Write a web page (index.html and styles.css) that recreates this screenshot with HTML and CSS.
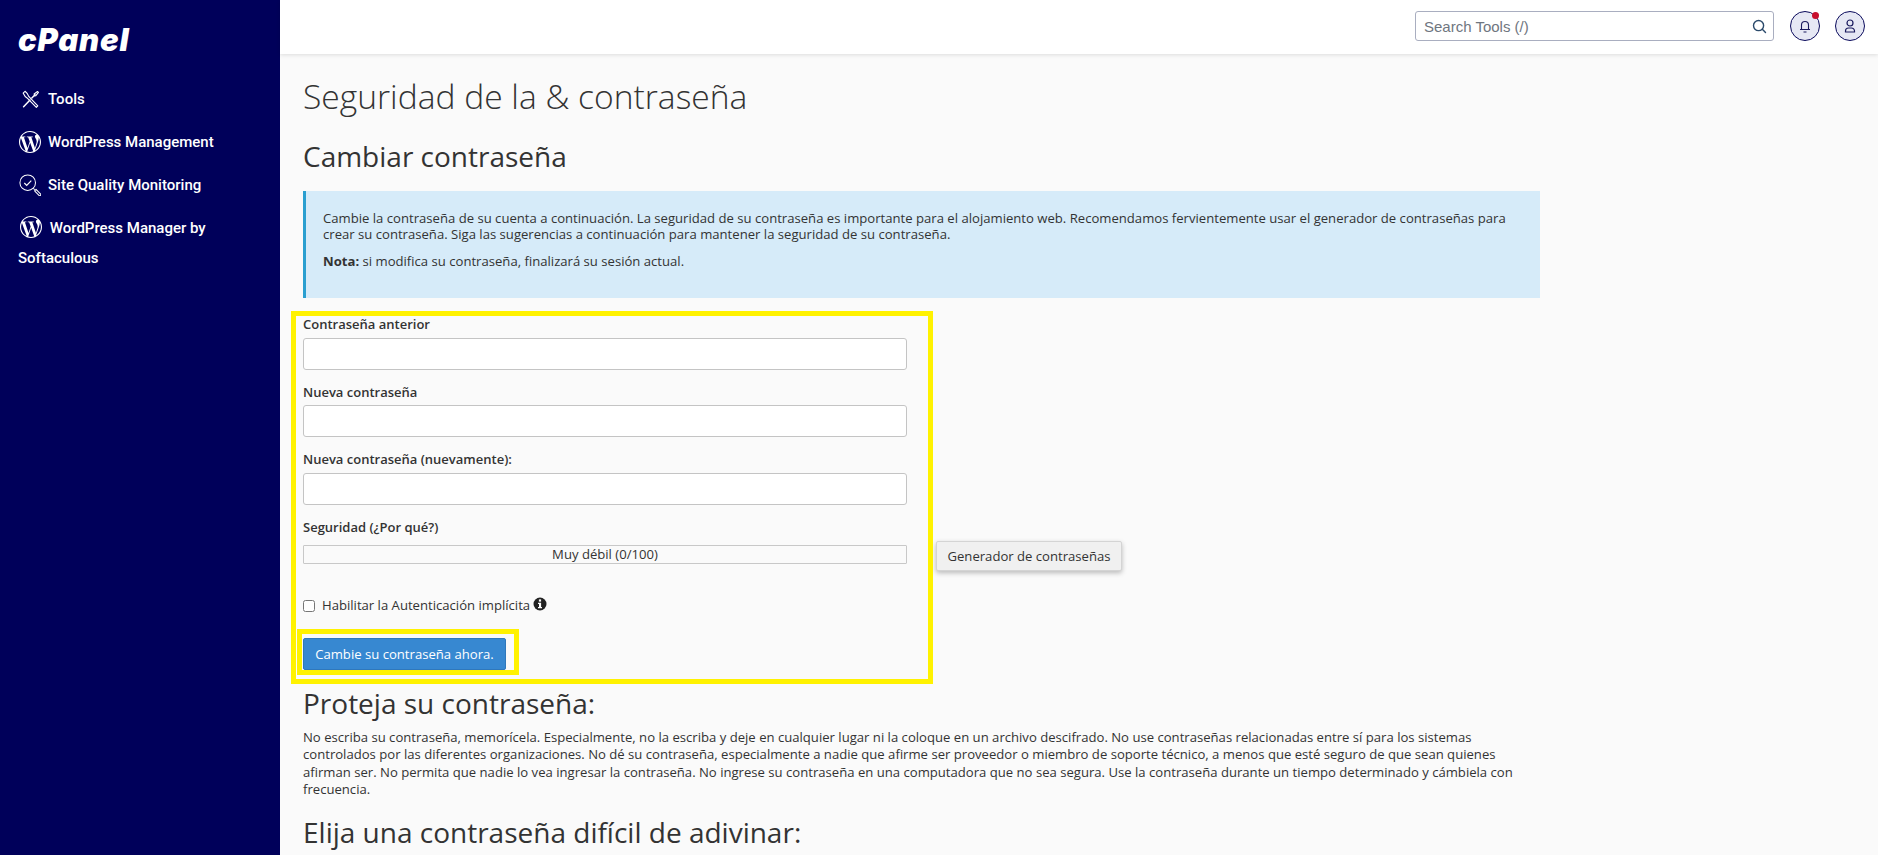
FILE: index.html
```html
<!DOCTYPE html>
<html lang="es">
<head>
<meta charset="utf-8">
<title>Cambiar contraseña</title>
<link rel="stylesheet" href="styles.css">
</head>
<body>
<div class="app">
  <aside class="sidebar">
    <div class="logo">cPanel</div>
    <nav class="nav">
      <a class="nav-item"><svg class="nav-icon" viewBox="0 0 24 24" fill="none" stroke="#fff" stroke-width="1.6"><path d="M5 20.5 12 13M14 11l3.5-3.6" stroke-linecap="round"/><path d="M16.5 6.5 20.2 3.8l1 1-2.8 3.6-1.4.2z" stroke-width="1.2" stroke-linejoin="round"/><path d="M4.5 5.5 6.6 3.6c2 1.6 3.4 3.6 4 5.6l9.9 10.4-1.6 1.6L8.8 10.8C7 10 5.6 8 4.5 5.5z" stroke-width="1.2" stroke-linejoin="round"/></svg><span>Tools</span></a>
      <a class="nav-item"><svg class="nav-icon" viewBox="0 0 24 24" fill="#fff"><path d="M21.469 6.825c.84 1.537 1.318 3.3 1.318 5.175 0 3.979-2.156 7.456-5.363 9.325l3.295-9.527c.615-1.54.82-2.771.82-3.864 0-.405-.026-.78-.07-1.11m-7.981.105c.647-.03 1.232-.105 1.232-.105.582-.075.514-.93-.067-.899 0 0-1.755.135-2.88.135-1.064 0-2.85-.15-2.85-.15-.585-.03-.661.855-.075.885 0 0 .54.061 1.125.09l1.68 4.605-2.37 7.08L5.354 6.9c.649-.03 1.234-.1 1.234-.1.585-.075.516-.93-.065-.896 0 0-1.746.138-2.874.138-.2 0-.438-.008-.69-.015C4.911 3.15 8.235 1.215 12 1.215c2.809 0 5.365 1.072 7.286 2.833-.046-.003-.091-.009-.141-.009-1.06 0-1.812.923-1.812 1.914 0 .89.513 1.643 1.06 2.531.411.72.89 1.643.89 2.977 0 .915-.354 2-.821 3.48l-1.075 3.585-3.9-11.61.001.014zM12 22.784c-1.059 0-2.081-.153-3.048-.437l3.237-9.406 3.315 9.087c.024.053.05.101.078.149-1.12.393-2.325.609-3.582.609M1.211 12c0-1.564.336-3.05.935-4.39L7.29 21.709C3.694 19.96 1.212 16.271 1.211 12M12 0C5.385 0 0 5.385 0 12s5.385 12 12 12 12-5.385 12-12S18.615 0 12 0"/></svg><span>WordPress Management</span></a>
      <a class="nav-item"><svg class="nav-icon" viewBox="0 0 24 24" fill="none" stroke="#fff" stroke-width="1.1"><circle cx="9.5" cy="9.5" r="8.5"/><path d="m5.8 9.8 2.6 2.6 5-5.2" stroke-width="1.3"/><path d="m15.6 15.6 1.6 1.6M17 18.4l1.6-1.6 4.8 4.9a1.1 1.1 0 0 1-1.6 1.6z" stroke-linejoin="round"/></svg><span>Site Quality Monitoring</span></a>
      <a class="nav-item nav-item-wrap"><svg class="nav-icon nav-icon-shift" viewBox="0 0 24 24" fill="#fff"><path d="M21.469 6.825c.84 1.537 1.318 3.3 1.318 5.175 0 3.979-2.156 7.456-5.363 9.325l3.295-9.527c.615-1.54.82-2.771.82-3.864 0-.405-.026-.78-.07-1.11m-7.981.105c.647-.03 1.232-.105 1.232-.105.582-.075.514-.93-.067-.899 0 0-1.755.135-2.88.135-1.064 0-2.85-.15-2.85-.15-.585-.03-.661.855-.075.885 0 0 .54.061 1.125.09l1.68 4.605-2.37 7.08L5.354 6.9c.649-.03 1.234-.1 1.234-.1.585-.075.516-.93-.065-.896 0 0-1.746.138-2.874.138-.2 0-.438-.008-.69-.015C4.911 3.15 8.235 1.215 12 1.215c2.809 0 5.365 1.072 7.286 2.833-.046-.003-.091-.009-.141-.009-1.06 0-1.812.923-1.812 1.914 0 .89.513 1.643 1.06 2.531.411.72.89 1.643.89 2.977 0 .915-.354 2-.821 3.48l-1.075 3.585-3.9-11.61.001.014zM12 22.784c-1.059 0-2.081-.153-3.048-.437l3.237-9.406 3.315 9.087c.024.053.05.101.078.149-1.12.393-2.325.609-3.582.609M1.211 12c0-1.564.336-3.05.935-4.39L7.29 21.709C3.694 19.96 1.212 16.271 1.211 12M12 0C5.385 0 0 5.385 0 12s5.385 12 12 12 12-5.385 12-12S18.615 0 12 0"/></svg> WordPress Manager by Softaculous</a>
    </nav>
  </aside>
  <div class="column">
    <header class="topbar">
      <div class="search">
        <span class="search-text">Search Tools (/)</span>
        <svg class="search-icon" viewBox="0 0 16 16" fill="none" stroke="#2b4a6b" stroke-width="1.5"><circle cx="7" cy="7" r="5.4"/><path d="m11 11 3.4 3.4" stroke-linecap="round"/></svg>
      </div>
      <div class="round-btn">
        <svg class="round-icon" viewBox="0 0 16 16" fill="none" stroke="#1a1a5e" stroke-width="1.1"><path d="M3 11.5h10M4.5 11.5V7a3.5 3.5 0 0 1 7 0v4.5M6.5 14h3"/></svg>
        <span class="dot"></span>
      </div>
      <div class="round-btn">
        <svg class="round-icon" viewBox="0 0 16 16" fill="none" stroke="#1a1a5e" stroke-width="1.2"><circle cx="8" cy="5" r="3"/><path d="M3.5 14v-1a3 3 0 0 1 3-3h3a3 3 0 0 1 3 3v1z"/></svg>
      </div>
    </header>
    <main class="main">
      <h1 class="page-title">Seguridad de la &amp; contraseña</h1>
      <h2 class="section-title">Cambiar contraseña</h2>
      <div class="alert">
        <p>Cambie la contraseña de su cuenta a continuación. La seguridad de su contraseña es importante para el alojamiento web. Recomendamos fervientemente usar el generador de contraseñas para crear su contraseña. Siga las sugerencias a continuación para mantener la seguridad de su contraseña.</p>
        <p class="alert-note"><strong>Nota:</strong> si modifica su contraseña, finalizará su sesión actual.</p>
      </div>
      <form class="form">
        <span class="highlight-outer"></span>
        <div class="field">
          <label class="label">Contraseña anterior</label>
          <input class="input" type="password">
        </div>
        <div class="field">
          <label class="label">Nueva contraseña</label>
          <input class="input" type="password">
        </div>
        <div class="field">
          <label class="label">Nueva contraseña (nuevamente):</label>
          <input class="input" type="password">
        </div>
        <label class="label label-strength">Seguridad (¿Por qué?)</label>
        <div class="strength-row">
          <div class="meter">Muy débil (0/100)</div>
          <button class="btn-generator" type="button">Generador de contraseñas</button>
        </div>
        <div class="check-row">
          <input class="check" type="checkbox">
          <span>Habilitar la Autenticación implícita</span>
          <svg class="info-icon" viewBox="0 0 14 14"><circle cx="7" cy="7" r="6.5" fill="#222"/><rect x="5.9" y="2.4" width="2.2" height="2.2" fill="#fff"/><path d="M5 5.8h3.1v4.1H9v1.3H5V9.9h1V7.1H5z" fill="#fff"/></svg>
        </div>
        <div class="submit-wrap">
          <span class="highlight-inner"></span>
          <button class="btn-primary" type="button">Cambie su contraseña ahora.</button>
        </div>
      </form>
      <h2 class="section-title section-sub">Proteja su contraseña:</h2>
      <p class="body-text">No escriba su contraseña, memorícela. Especialmente, no la escriba y deje en cualquier lugar ni la coloque en un archivo descifrado. No use contraseñas relacionadas entre sí para los sistemas controlados por las diferentes organizaciones. No dé su contraseña, especialmente a nadie que afirme ser proveedor o miembro de soporte técnico, a menos que esté seguro de que sean quienes afirman ser. No permita que nadie lo vea ingresar la contraseña. No ingrese su contraseña en una computadora que no sea segura. Use la contraseña durante un tiempo determinado y cámbiela con frecuencia.</p>
      <h2 class="section-title section-sub2">Elija una contraseña difícil de adivinar:</h2>
    </main>
  </div>
</div>
</body>
</html>
```
FILE: styles.css
```css
* { box-sizing: border-box; }
html, body { margin: 0; height: 100%; overflow: hidden; }
body { font-family: "Open Sans", sans-serif; font-size: 13.12px; color: #333; background: #fafafa; }
.app { display: flex; height: 855px; }

.sidebar { width: 280px; flex: none; background: #00005a; color: #fff; padding: 21px 18px 0; font-family: Roboto, sans-serif; font-size: 15px; font-weight: 500; }
.logo { font-family: Inter, Roboto, sans-serif; font-weight: 900; font-style: italic; font-size: 31px; line-height: 38px; letter-spacing: 0.8px; height: 38px; }
.nav { margin-top: 25px; display: flex; flex-direction: column; gap: 13px; }
.nav-item { display: flex; align-items: center; gap: 6px; line-height: 30px; height: 30px; }
.nav-item-wrap { display: block; height: auto; width: 200px; }
.nav-icon { width: 22px; height: 22px; flex: none; margin-left: 1px; margin-right: 1px; }
.nav-icon-shift { vertical-align: -5px; margin-left: 2px; margin-right: 4px; }

.column { flex: 1; min-width: 0; display: flex; flex-direction: column; }
.topbar { height: 54px; flex: none; background: #fff; box-shadow: 0 1px 4px rgba(0,0,0,.12); display: flex; align-items: center; justify-content: flex-end; padding: 0 13px 2px 0; gap: 15px; position: relative; z-index: 1; }
.search { width: 359px; height: 30px; border: 1px solid #a9aec0; border-radius: 3px; display: flex; align-items: center; justify-content: space-between; padding: 0 6px 0 8px; margin-right: 1px; background: #fff; }
.search-text { font-family: "Liberation Sans", sans-serif; font-size: 15px; color: #6f7680; }
.search-icon { width: 15px; height: 15px; }
.round-btn { width: 30px; height: 30px; border-radius: 50%; border: 1.5px solid #0b0b5c; background: #e6e8f4; display: flex; align-items: center; justify-content: center; position: relative; }
.round-icon { width: 16px; height: 16px; }
.dot { position: absolute; top: 0; right: 0; width: 7px; height: 7px; border-radius: 50%; background: #c8102e; }

.main { padding: 17px 0 0 23px; width: 1260px; }
.page-title { margin: 0; font-size: 33.6px; font-weight: 300; line-height: 50px; color: #333; }
.section-title { margin: 15px 0 0; font-size: 28px; font-weight: 400; line-height: 40px; color: #333; }
.alert { margin-top: 15px; height: 107px; width: 1237px; background: #d6ebf9; border-left: 3px solid #2a9fd0; padding: 19px 24px 0 17px; line-height: 16px; }
.alert p { margin: 0; }
.alert .alert-note { margin-top: 11px; }

.form { position: relative; margin-top: 16px; }
.highlight-outer { position: absolute; left: -12px; top: -3px; width: 642px; height: 373px; border: 5px solid #fff200; pointer-events: none; }
.field { margin-bottom: 12px; }
.label { display: block; font-size: 13px; font-weight: 600; line-height: 20px; }
.input { display: block; width: 604px; height: 32px; margin-top: 3.5px; background: #fff; border: 1px solid #c4c4c4; border-radius: 3px; }
.label-strength { margin-bottom: 4px; }
.strength-row { display: flex; align-items: flex-start; gap: 29px; }
.meter { width: 604px; height: 19px; margin-top: 4px; border: 1px solid #c8c8c8; border-radius: 1px; text-align: center; line-height: 17px; background: #fafafa; }
.btn-generator { width: 186px; height: 30px; padding: 0; font: inherit; color: #333; background: #f0f0f0; border: 1px solid #d4d4d4; border-radius: 2px; box-shadow: 0 2px 5px rgba(0,0,0,.26); }
.check-row { margin-top: 24px; height: 20px; display: flex; align-items: center; }
.check { width: 12px; height: 12px; margin: 2px 7px 0 0; }
.info-icon { width: 14px; height: 14px; margin: -2px 0 0 3px; }
.submit-wrap { position: relative; margin-top: 23px; width: 203px; }
.btn-primary { display: block; width: 203px; height: 32px; padding: 0; font: inherit; color: #fff; background: #3788d1; border: 1px solid #2f78bb; border-radius: 2px; }
.highlight-inner { position: absolute; left: -6px; right: -13px; top: -9px; bottom: -5px; border: 5px solid #fff200; pointer-events: none; }

.section-sub { margin-top: 13px; }
.body-text { margin: 6px 0 0; width: 1237px; line-height: 17.5px; }
.section-sub2 { margin-top: 13px; }
```
